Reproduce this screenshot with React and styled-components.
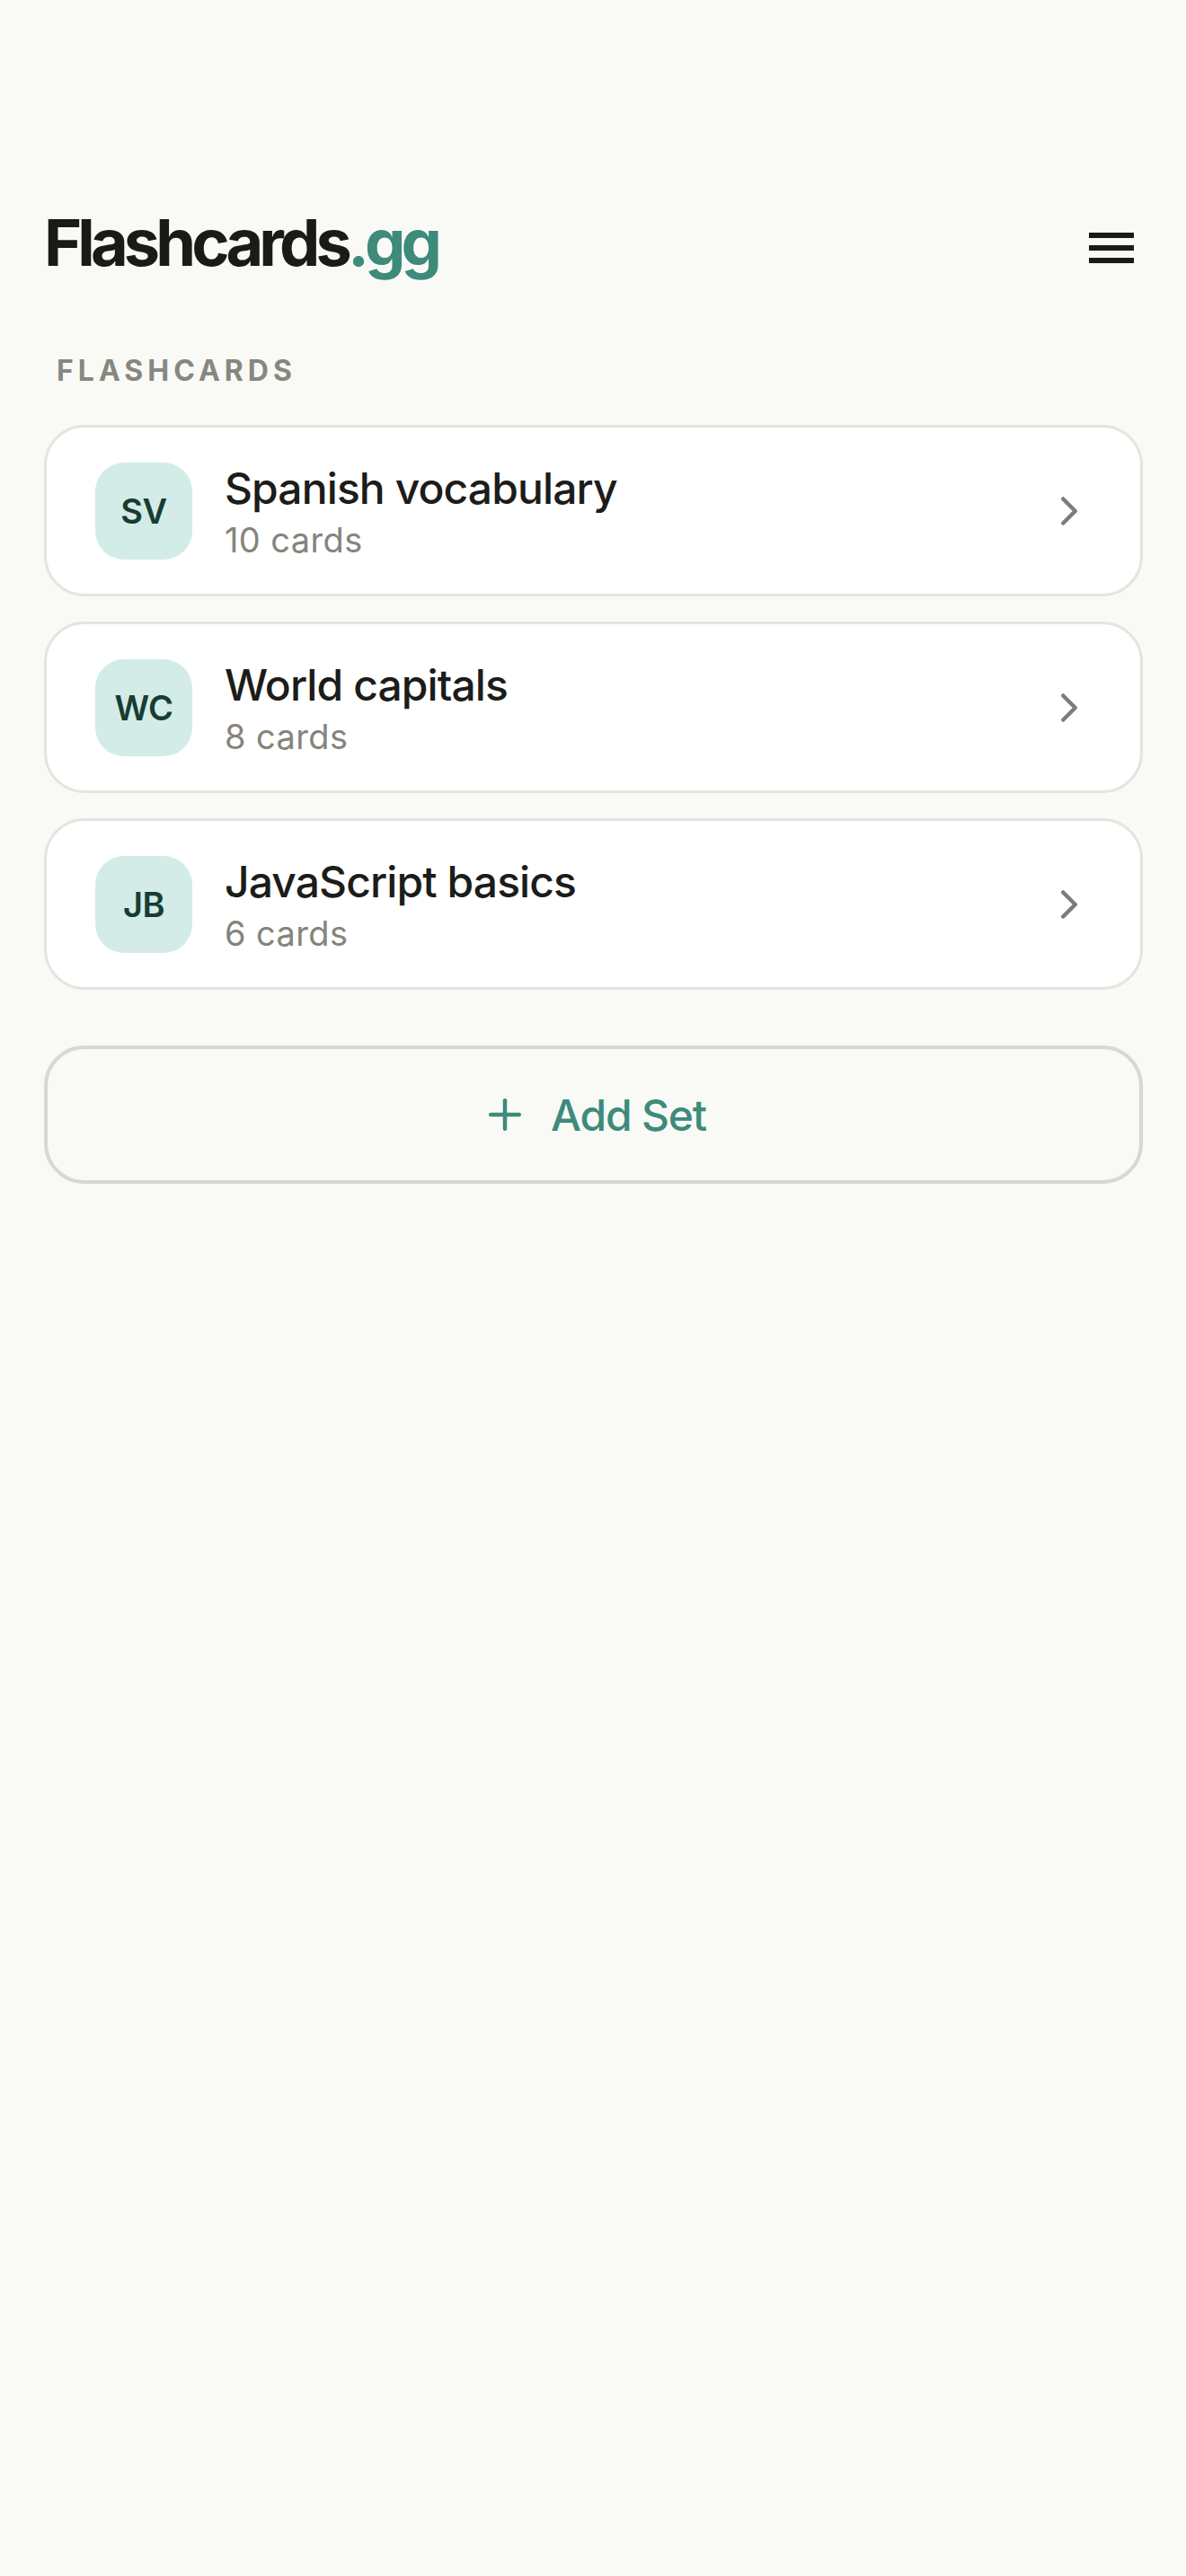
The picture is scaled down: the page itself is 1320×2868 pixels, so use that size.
import React from "react";
import styled, { createGlobalStyle } from "styled-components";
import { ChevronRight, Plus } from "lucide-react";

const GlobalStyle = createGlobalStyle`
  html, body {
    margin: 0;
    padding: 0;
    background: #f9faf6;
  }
  body {
    font-family: Inter, "Noto Sans", "Liberation Sans", sans-serif;
    color: #1c1c1a;
    -webkit-font-smoothing: antialiased;
  }
  * {
    box-sizing: border-box;
  }
`;

const Page = styled.div`
  min-height: 2868px;
  padding: 227px 48px 0 49px;
  background: #f9faf6;
`;

const Header = styled.header`
  display: flex;
  align-items: center;
  justify-content: space-between;
  height: 86px;
`;

const Logo = styled.h1`
  margin: 0;
  font-size: 72px;
  line-height: 86px;
  font-weight: 700;
  letter-spacing: -4.9px;
  color: #1a1a18;

  span {
    color: #3e8a7b;
  }
`;

const MenuButton = styled.button`
  display: flex;
  align-items: center;
  justify-content: center;
  width: 50px;
  height: 36px;
  margin: 12px 10px 0 0;
  padding: 0;
  border: none;
  background: none;
  cursor: pointer;
`;

const SectionLabel = styled.div`
  margin: 81px 0 41px 14px;
  font-size: 32px;
  line-height: 38px;
  font-weight: 700;
  letter-spacing: 5px;
  color: #878780;
`;

const List = styled.div`
  display: flex;
  flex-direction: column;
  gap: 28px;
`;

const Card = styled.div`
  display: flex;
  align-items: center;
  gap: 36px;
  height: 191px;
  padding: 0 52px 0 54px;
  background: #ffffff;
  border: 3px solid #e5e5df;
  border-radius: 45px;
  cursor: pointer;
`;

const Avatar = styled.div`
  flex: none;
  display: flex;
  align-items: center;
  justify-content: center;
  width: 108px;
  height: 108px;
  border-radius: 32px;
  background: #d3ece8;
  color: #173d33;
  font-size: 38px;
  font-weight: 600;
  letter-spacing: -0.5px;
`;

const Info = styled.div`
  flex: 1;
  display: flex;
  flex-direction: column;
  gap: 5px;
  min-width: 0;
`;

const Title = styled.div`
  font-size: 48px;
  line-height: 60px;
  font-weight: 500;
  letter-spacing: -0.9px;
  color: #1c1c1a;
`;

const Count = styled.div`
  font-size: 38px;
  line-height: 45px;
  font-weight: 400;
  letter-spacing: 0.4px;
  color: #84847c;
`;

const Chevron = styled(ChevronRight)`
  flex: none;
  color: #7d7d75;
`;

const AddButton = styled.button`
  display: flex;
  align-items: center;
  justify-content: center;
  gap: 24px;
  width: 100%;
  height: 154px;
  margin-top: 62px;
  border: 4.5px solid #d8d8d2;
  border-radius: 45px;
  background: transparent;
  color: #3e8a7b;
  font-family: inherit;
  font-size: 48px;
  font-weight: 500;
  letter-spacing: -1.2px;
  cursor: pointer;
`;

const sets = [
  { initials: "SV", title: "Spanish vocabulary", count: 10 },
  { initials: "WC", title: "World capitals", count: 8 },
  { initials: "JB", title: "JavaScript basics", count: 6 },
];

const MenuIcon = () => (
  <svg width="50" height="34" viewBox="0 0 50 34" fill="#1a1a18">
    <rect x="0" y="0" width="50" height="6" />
    <rect x="0" y="14" width="50" height="6" />
    <rect x="0" y="28" width="50" height="6" />
  </svg>
);

export default function App() {
  return (
    <>
      <GlobalStyle />
      <Page>
        <Header>
          <Logo>
            Flashcards<span>.gg</span>
          </Logo>
          <MenuButton aria-label="Menu">
            <MenuIcon />
          </MenuButton>
        </Header>

        <SectionLabel>FLASHCARDS</SectionLabel>

        <List>
          {sets.map((set) => (
            <Card key={set.initials}>
              <Avatar>{set.initials}</Avatar>
              <Info>
                <Title>{set.title}</Title>
                <Count>{set.count} cards</Count>
              </Info>
              <Chevron size={54} strokeWidth={2} />
            </Card>
          ))}
        </List>

        <AddButton>
          <Plus size={54} strokeWidth={2} />
          Add Set
        </AddButton>
      </Page>
    </>
  );
}
